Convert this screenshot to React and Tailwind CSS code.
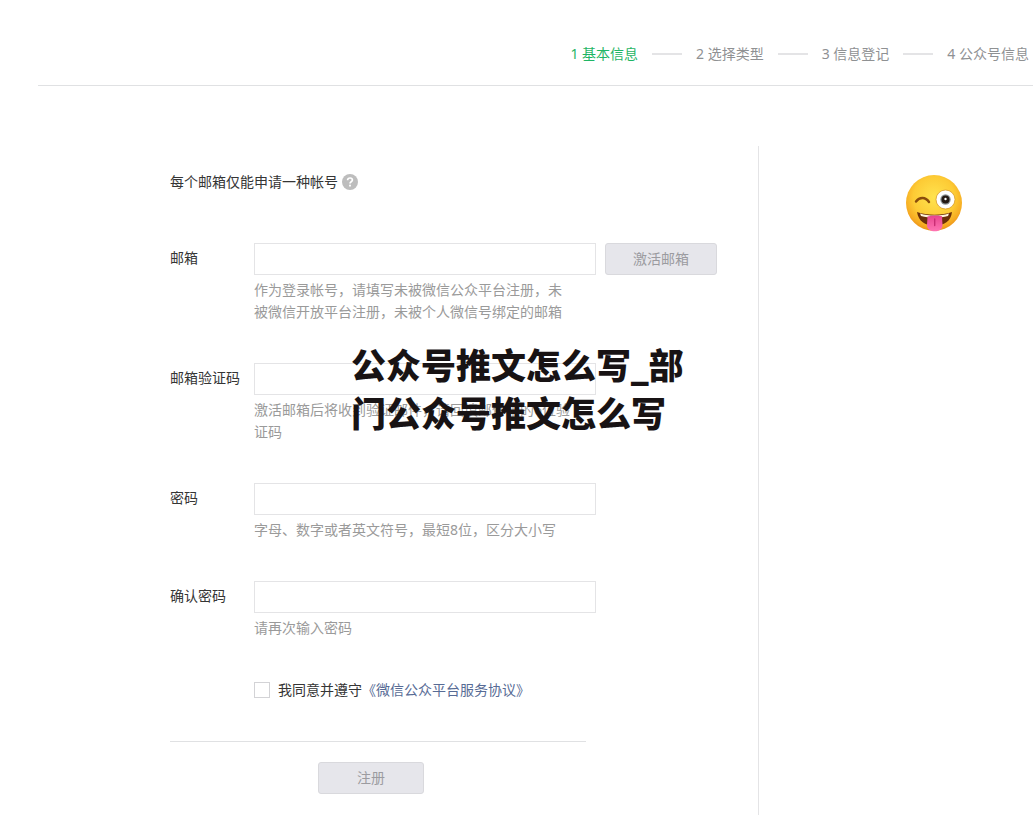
import React from 'react';

const STEPS = ['1 基本信息', '2 选择类型', '3 信息登记', '4 公众号信息'];

const FIELDS = [
    {
        id: 'email',
        type: 'email',
        label: '邮箱',
        hint: '作为登录帐号，请填写未被微信公众平台注册，未被微信开放平台注册，未被个人微信号绑定的邮箱',
        action: '激活邮箱',
    },
    {
        id: 'code',
        type: 'text',
        label: '邮箱验证码',
        hint: '激活邮箱后将收到验证邮件，请回填邮件中的6位验证码',
    },
    {
        id: 'password',
        type: 'password',
        label: '密码',
        hint: '字母、数字或者英文符号，最短8位，区分大小写',
    },
    {
        id: 'confirm',
        type: 'password',
        label: '确认密码',
        hint: '请再次输入密码',
    },
];

const StepBar = () => (
    <ol className="flex items-center justify-end gap-3.5 whitespace-nowrap">
        {STEPS.map((step, i) => (
            <React.Fragment key={step}>
                {i > 0 && <li aria-hidden="true" className="h-0.5 w-[30px] shrink-0 bg-[#e4e4e6]" />}
                <li className={i === 0 ? 'text-[#1fb565]' : 'text-[#8f9193]'}>{step}</li>
            </React.Fragment>
        ))}
    </ol>
);

const HelpIcon = () => (
    <svg className="size-4" viewBox="0 0 16 16" aria-hidden="true">
        <circle cx="8" cy="8" r="8" fill="#bdbdbd" />
        <path
            d="M5.6 6.3C5.6 4.8 6.6 4 8 4s2.4.8 2.4 2.1c0 1.7-2.4 1.7-2.4 3.5"
            fill="none"
            stroke="#fff"
            strokeWidth="1.7"
        />
        <rect x="7.1" y="10.7" width="1.8" height="1.8" fill="#fff" />
    </svg>
);

const WinkEmoji = () => (
    <svg className="size-15" viewBox="0 0 60 60" aria-hidden="true">
        <defs>
            <radialGradient id="face" cx="0.5" cy="0.4" r="0.62">
                <stop offset="0" stopColor="#ffe34f" />
                <stop offset="0.6" stopColor="#fdcb35" />
                <stop offset="0.85" stopColor="#f6ab22" />
                <stop offset="1" stopColor="#e98a17" />
            </radialGradient>
            <linearGradient id="tongue" x1="0" y1="0" x2="0" y2="1">
                <stop offset="0" stopColor="#e8468f" />
                <stop offset="1" stopColor="#ff74b4" />
            </linearGradient>
        </defs>
        <circle cx="30" cy="30" r="28" fill="url(#face)" />
        <path d="M12 28.5c3.5-4.8 9.500-4.800 13 .5" fill="none" stroke="#8a4d0c" strokeWidth="2.400" strokeLinecap="round" />
        <circle cx="41.500" cy="26.500" r="9.500" fill="#fff" stroke="#d99a2a" strokeWidth="0.8" />
        <circle cx="41.500" cy="26.500" r="5.200" fill="#8d9498" />
        <circle cx="41.500" cy="26.500" r="4" fill="#241b16" />
        <circle cx="41.500" cy="26" r="1.200" fill="#fff" />
        <path d="M13 39c10 3.500 25 3.500 35 0-1 9.500-8 13.500-17.500 13.500S14.500 48.500 13 39z" fill="#6b2f09" />
        <path d="M16 40.500c9 2.800 20 2.800 29 0l-1 2.500c-8 2-19 2-27 0z" fill="#fff3dc" />
        <path d="M23.500 43.500c5-1.200 10-1.200 14.500-.2l.5 9c0 8-15.500 8-15.500 0z" fill="url(#tongue)" />
        <path d="M30.700 46v6.500" stroke="#c92e74" strokeWidth="1.400" strokeLinecap="round" />
    </svg>
);

const disabledButton = 'h-8 shrink-0 rounded-[3px] border border-[#d9d9dd] bg-[#e6e6eb] text-[#9b9ba0]';

const Field = ({ id, type, label, hint, action }) => (
    <div className="flex items-start">
        <label htmlFor={id} className="w-[84px] shrink-0 pt-1 text-[#353535]">{label}</label>
        <div>
            <div className="flex gap-[9px]">
                <input
                    id={id}
                    type={type}
                    className="h-8 w-[342px] border border-[#e4e4e6] bg-white px-2 outline-none"
                />
                {action && <button type="button" className={`${disabledButton} w-28`}>{action}</button>}
            </div>
            <p className="mt-1 w-80 text-[#9a9a9a]">{hint}</p>
        </div>
    </div>
);

const App = () => (
    <div className="overflow-hidden bg-white pb-6 font-['Noto_Sans','Noto_Sans_CJK_SC',sans-serif] text-sm leading-[22px]">
        <header className="ml-[38px] border-b border-[#e0e1e3] pt-[43px] pr-1 pb-5">
            <StepBar />
        </header>

        <div className="mt-15 ml-[170px] flex">
            <main className="relative flex-1 border-r border-[#e4e4e6] pt-[25px] pb-[21px]">
                <p className="mb-[50px] flex items-center gap-1 text-[#353535]">
                    每个邮箱仅能申请一种帐号
                    <HelpIcon />
                </p>

                <form className="flex flex-col gap-10">
                    {FIELDS.map((field) => (
                        <Field key={field.id} {...field} />
                    ))}

                    <div className="ml-[84px] flex items-center">
                        <input
                            id="agree"
                            type="checkbox"
                            className="mr-2 size-4 appearance-none border border-[#d3d3d6] bg-white"
                        />
                        <label htmlFor="agree" className="text-[#353535]">我同意并遵守</label>
                        <a href="#agreement" className="text-[#576b95]">《微信公众平台服务协议》</a>
                    </div>

                    <div className="w-[416px] border-t border-[#e0e1e3] pt-5 pl-[148px]">
                        <button type="submit" className={`${disabledButton} w-[106px]`}>注册</button>
                    </div>
                </form>

                <h1 className="pointer-events-none absolute top-[196px] left-[181px] w-[350px] text-[35px] leading-12 font-black text-[#181314]">
                    公众号推文怎么写_部门公众号推文怎么写
                </h1>
            </main>

            <aside className="flex w-[274px] shrink-0 justify-end pt-[27px] pr-[69px]">
                <WinkEmoji />
            </aside>
        </div>
    </div>
);

export default App;
